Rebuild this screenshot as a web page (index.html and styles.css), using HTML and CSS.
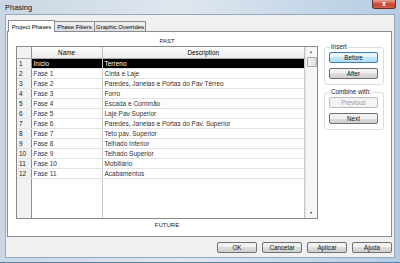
FILE: index.html
```html
<!DOCTYPE html>
<html lang="pt-BR">
<head>
    <meta charset="UTF-8">
    <title>Phasing</title>
    <link rel="stylesheet" href="styles.css">
</head>
<body>
    <div class="window">
        <div class="titlebar">
            <span class="title">Phasing</span>
            <span class="close">x</span>
        </div>

        <div class="client">
            <div class="tabs">
                <div class="tab active">Project Phases</div>
                <div class="tab">Phase Filters</div>
                <div class="tab">Graphic Overrides</div>
            </div>

            <div class="panel">
                <div class="phases">
                    <div class="caption">PAST</div>
                    <div class="grid">
                        <table class="phase-table">
                            <colgroup>
                                <col class="col-num">
                                <col class="col-name">
                                <col>
                            </colgroup>
                            <thead>
                                <tr><th class="num"></th><th>Name</th><th>Description</th></tr>
                            </thead>
                            <tbody>
                                <tr class="selected"><td class="num">1</td><td>Início</td><td>Terreno</td></tr>
                                <tr><td class="num">2</td><td>Fase 1</td><td>Cinta e Laje</td></tr>
                                <tr><td class="num">3</td><td>Fase 2</td><td>Paredes, Janelas e Portas do Pav Térreo</td></tr>
                                <tr><td class="num">4</td><td>Fase 3</td><td>Forro</td></tr>
                                <tr><td class="num">5</td><td>Fase 4</td><td>Escada e Corrimão</td></tr>
                                <tr><td class="num">6</td><td>Fase 5</td><td>Laje Pav Superior</td></tr>
                                <tr><td class="num">7</td><td>Fase 6</td><td>Paredes, Janelas e Portas do Pav. Superior</td></tr>
                                <tr><td class="num">8</td><td>Fase 7</td><td>Teto pav. Superior</td></tr>
                                <tr><td class="num">9</td><td>Fase 8</td><td>Telhado Inferior</td></tr>
                                <tr><td class="num">10</td><td>Fase 9</td><td>Telhado Superior</td></tr>
                                <tr><td class="num">11</td><td>Fase 10</td><td>Mobiliário</td></tr>
                                <tr><td class="num">12</td><td>Fase 11</td><td>Acabamentos</td></tr>
                                <tr class="filler"><td class="num"></td><td></td><td></td></tr>
                            </tbody>
                        </table>
                        <div class="scrollbar">
                            <div class="arrow up"></div>
                            <div class="thumb"></div>
                            <div class="track"></div>
                            <div class="arrow down"></div>
                        </div>
                    </div>
                    <div class="caption">FUTURE</div>
                </div>

                <div class="side">
                    <fieldset class="group">
                        <legend>Insert</legend>
                        <button class="btn default">Before</button>
                        <button class="btn">After</button>
                    </fieldset>
                    <fieldset class="group">
                        <legend>Combine with:</legend>
                        <button class="btn" disabled>Previous</button>
                        <button class="btn">Next</button>
                    </fieldset>
                </div>
            </div>

            <div class="footer">
                <button class="btn wide">OK</button>
                <button class="btn wide">Cancelar</button>
                <button class="btn wide">Aplicar</button>
                <button class="btn wide">Ajuda</button>
            </div>
        </div>
    </div>
</body>
</html>
```

FILE: styles.css
```css
body {
    margin: 0;
    width: 400px;
    height: 263px;
    overflow: hidden;
    font-family: 'Liberation Sans', Arial, sans-serif;
    font-size: 6.5px;
    color: #000;
}
.window {
    width: 400px;
    height: 263px;
    box-sizing: border-box;
    padding: 0 5px 4px 5px;
    background: linear-gradient(to right, #c9d6e3, #dfe7ef 45%, #b4cce3);
    border-bottom: 1px solid #4f86b3;
    display: flex;
    flex-direction: column;
}
.titlebar {
    height: 14px;
    display: flex;
    align-items: center;
    justify-content: space-between;
    flex-shrink: 0;
}
.title {
    font-size: 7.5px;
    color: #111;
    margin-top: 1px;
}
.close {
    align-self: flex-start;
    width: 22px;
    height: 8px;
    margin-right: -1px;
    border: 1px solid #6b2a22;
    border-top: none;
    border-radius: 0 0 3px 3px;
    background: linear-gradient(#e8a493, #c9452d 55%, #d1614c);
    color: #fff;
    font-size: 7px;
    font-weight: bold;
    line-height: 7px;
    text-align: center;
}
.client {
    flex: 1;
    background: #f0f0f0;
    border: 1px solid #97a9bc;
    display: flex;
    flex-direction: column;
}
.tabs {
    display: flex;
    padding: 4px 0 0 2px;
    height: 12px;
    align-items: flex-end;
}
.tab {
    height: 10px;
    line-height: 10px;
    box-sizing: border-box;
    padding: 0 1px;
    border: 1px solid #898c95;
    border-bottom: none;
    margin-right: -1px;
    background: linear-gradient(#f2f2f2, #dcdcdc);
    font-size: 5.9px;
    white-space: nowrap;
    overflow: hidden;
    text-align: center;
}
.tab:nth-child(1) { width: 47px; }
.tab:nth-child(2) { width: 41px; }
.tab:nth-child(3) { width: 52px; }
.tab.active {
    height: 12px;
    line-height: 12px;
    background: #fff;
    position: relative;
    margin-bottom: -1px;
    z-index: 1;
}
.panel {
    height: 206px;
    margin: 0 2px 0 1px;
    background: #fff;
    border: 1px solid #898c95;
    box-sizing: border-box;
    display: flex;
    padding: 5px 0 0 8px;
}
.phases {
    width: 302px;
    display: flex;
    flex-direction: column;
}
.caption {
    text-align: center;
    height: 9px;
    line-height: 8px;
    font-size: 6px;
    color: #222;
}
.phases .caption:last-child {
    margin-top: 2px;
}
.grid {
    height: 173px;
    box-sizing: border-box;
    border: 1px solid #8a8a8a;
    display: flex;
}
.phase-table {
    flex: 1;
    border-collapse: collapse;
    table-layout: fixed;
    height: 171px;
}
.col-num { width: 14px; }
.col-name { width: 71px; }
.phase-table th {
    height: 11px;
    padding: 0;
    font-weight: normal;
    font-size: 6.3px;
    background: linear-gradient(#fbfbfb, #ececec);
    border-right: 1px solid #c2c2c2;
    border-bottom: 1px solid #a9a9a9;
    text-align: center;
}
.phase-table td {
    height: 9px;
    padding: 0 0 0 2px;
    line-height: 9px;
    white-space: nowrap;
    overflow: hidden;
    border-right: 1px solid #c8c8c8;
    border-bottom: 1px solid #e2e2e2;
    color: #333;
}
.phase-table td.num, .phase-table th.num {
    background: #f1f1f1;
    border-right: 1px solid #8f8f8f;
    color: #222;
}
.phase-table tr.selected td:not(.num) {
    background: #000;
    color: #fff;
}
.phase-table tr.filler td {
    height: auto;
    border-bottom: none;
}
.scrollbar {
    width: 11px;
    border-left: 1px solid #e2e2e2;
    background: #f6f6f6;
    display: flex;
    flex-direction: column;
    align-items: center;
}
.arrow {
    height: 10px;
    width: 11px;
    position: relative;
}
.arrow::after {
    content: "";
    position: absolute;
    left: 4px;
    top: 4px;
    border-left: 1.5px solid transparent;
    border-right: 1.5px solid transparent;
}
.arrow.up::after { border-bottom: 2px solid #333; }
.arrow.down::after { border-top: 2px solid #333; }
.thumb {
    width: 8px;
    height: 8px;
    border: 1px solid #a6a6a6;
    border-radius: 1px;
    background: linear-gradient(to right, #f4f4f4, #dedede);
}
.track {
    flex: 1;
}
.side {
    width: 60px;
    margin-left: 6px;
    padding-top: 6px;
}
.group {
    margin: 0 0 3px 0;
    padding: 1px 5px 5px 4px;
    border: 1px solid #d5dfe5;
    border-radius: 3px;
    display: flex;
    flex-direction: column;
    gap: 5px;
}
.group legend {
    padding: 0 1px;
    margin-left: 1px;
    font-size: 6.3px;
    line-height: 8px;
    color: #222;
}
.btn {
    height: 11px;
    padding: 0;
    box-sizing: border-box;
    font-family: inherit;
    font-size: 6.3px;
    color: #111;
    border: 1px solid #707070;
    border-radius: 2px;
    background: linear-gradient(#f2f2f2 50%, #dddddd 50%, #cfcfcf);
}
.btn.default {
    border-color: #3c7fb1;
    background: linear-gradient(#e9f5fd 50%, #c4e4f8 50%, #b3dcf5);
}
.btn:disabled {
    border-color: #b8bcbe;
    background: #f4f4f4;
    color: #9c9c9c;
}
.footer {
    display: flex;
    justify-content: flex-end;
    gap: 5px;
    padding: 5px 2px 0 0;
}
.btn.wide {
    width: 40px;
}
```
